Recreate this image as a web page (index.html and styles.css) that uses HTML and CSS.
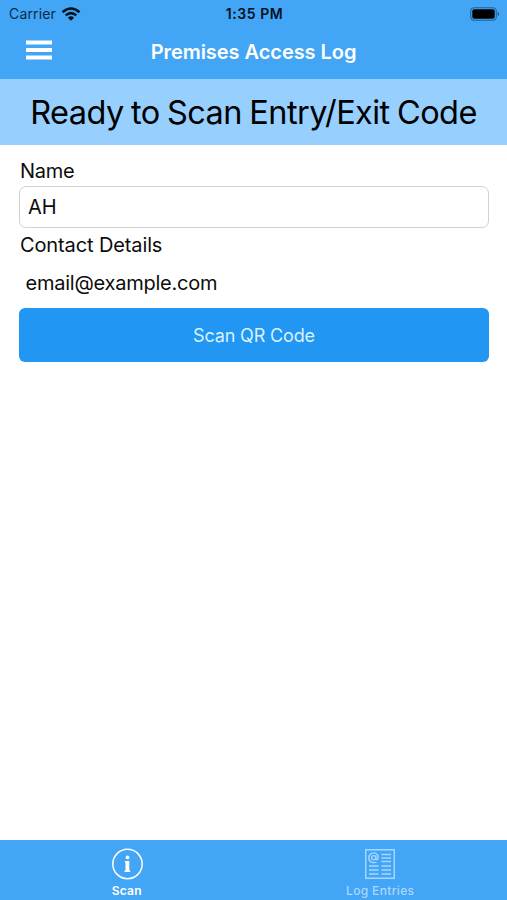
FILE: index.html
```
<!DOCTYPE html>
<html lang="en">
<head>
<meta charset="utf-8">
<title>Premises Access Log</title>
<link rel="stylesheet" href="styles.css">
</head>
<body>
<header class="top">
  <div class="status">
    <div class="carrier"><span>Carrier</span>
      <svg class="wifi" width="20" height="14" viewBox="0 0 20 14"><g fill="none" stroke="#06121d" stroke-width="2.5"><path d="M1.5 5.2Q10-2.2 18.5 5.2"/><path d="M4.7 8.4Q10 3.8 15.3 8.4"/></g><path d="M6.9 10.7Q10 8 13.1 10.7L10 13.8Z" fill="#06121d"/></svg>
    </div>
    <span class="time">1:35 PM</span>
    <svg class="battery" width="30" height="14" viewBox="0 0 30 14"><rect x=".7" y=".7" width="25.6" height="12.6" rx="3.6" fill="none" stroke="#206398" stroke-width="1.1"/><rect x="2.3" y="2.3" width="22.4" height="9.4" rx="2" fill="#000"/><path d="M27.6 4.8Q29.3 5.4 29.3 7T27.6 9.2Z" fill="#206398"/></svg>
  </div>
  <div class="nav">
    <svg class="menu" width="26" height="20" viewBox="0 0 26 20" fill="#fff"><path d="M0 .5h26v4H0zM0 8h26v4H0zM0 15.5h26v4H0z"/></svg>
    <h1>Premises Access Log</h1>
  </div>
</header>
<div class="banner"><span>Ready to Scan Entry/Exit Code</span></div>
<main>
  <div class="label name">Name</div>
  <div class="input"><span>AH</span></div>
  <div class="label contact">Contact Details</div>
  <div class="email"><span>email@example.com</span></div>
  <button><span>Scan QR Code</span></button>
</main>
<footer>
  <div class="tab">
    <svg width="32" height="32" viewBox="0 0 32 32"><circle cx="16.5" cy="16" r="14.7" fill="none" stroke="#fff" stroke-width="1.5"/><circle cx="16.5" cy="9.4" r="1.9" fill="#fff"/><path d="M14 13h4.3v9.6h1V24h-5.8v-1.4h1v-8.2H14z" fill="#fff"/></svg>
    <span>Scan</span>
  </div>
  <div class="tab off">
    <svg width="32" height="32" viewBox="0 0 32 32" fill="none" stroke="#a9d8ff"><path d="M1.7 1.7h28.6v28.6H1.7z" stroke-width="1.4"/><circle cx="9.7" cy="9.8" r="2.1" stroke-width="1.3"/><path d="M11.8 7.6v3q.4 1.5 2 .5Q15 8 12.7 6T7.6 5.3T4.8 10T7.8 14.3T12.5 14" stroke-width="1.3"/><path d="M17.5 6.5H27M17.5 10H27M17.5 13.5H27M5 18h9.5M17.5 18H27M5 22h9.5M17.5 22H27M5 26h9.5M17.5 26H27" stroke-width="1.6"/></svg>
    <span>Log Entries</span>
  </div>
</footer>
</body>
</html>
```
FILE: styles.css
```
* { box-sizing: border-box; }
body {
  margin: 0;
  height: 900px;
  display: flex;
  flex-direction: column;
  background: #fff;
  color: #0c0c0c;
  font-family: Inter, "Liberation Sans", sans-serif;
  white-space: nowrap;
}
.top { height: 79px; background: #42a5f5; }
.status {
  height: 27px;
  display: grid;
  grid-template-columns: 1fr auto 1fr;
  align-items: center;
  padding: 0 7px 0 9px;
}
.carrier { display: flex; align-items: center; gap: 5px; font-size: 14px; color: #0b2c47; letter-spacing: 0.15px; }
.time { font-size: 14px; font-weight: 600; color: #06121d; letter-spacing: 0.55px; }
.battery { justify-self: end; }
.nav {
  height: 50px;
  display: grid;
  grid-template-columns: 1fr auto 1fr;
  align-items: center;
  padding: 0 26px;
}
.menu { margin-top: -4px; }
h1 { margin: 0; font-size: 20px; font-weight: 600; color: #fff; line-height: 50px; letter-spacing: -0.05px; }
.banner {
  height: 66px;
  background: #97d0ff;
  color: #000;
  font-size: 32.5px;
  line-height: 68px;
  text-align: center;
  letter-spacing: -0.57px;
  word-spacing: -1.2px;
}
main { flex: 1; padding: 12px 18px 0 19px; }
.label { font-size: 20px; line-height: 28px; padding-left: 1px; letter-spacing: -0.12px; }
.name { height: 29px; letter-spacing: -0.3px; }
.input {
  height: 42px;
  border: 1px solid #d2d2d2;
  border-radius: 7px;
  padding-left: 8px;
  font-size: 20px;
  line-height: 40px;
}
.contact { height: 32px; line-height: 34px; }
.email { height: 48px; padding-left: 6.5px; font-size: 20px; line-height: 46px; letter-spacing: -0.23px; }
button {
  display: block;
  width: 100%;
  height: 54px;
  border: 0;
  border-radius: 6px;
  background: #2196f3;
  color: #d9f2ff;
  font: 18px Inter, "Liberation Sans", sans-serif;
  letter-spacing: -0.15px;
}
footer { height: 60px; display: flex; background: #42a5f5; }
.tab {
  flex: 1;
  display: flex;
  flex-direction: column;
  align-items: center;
  padding-top: 8px;
  gap: 3px;
  color: #fff;
  font-size: 12px;
  font-weight: 600;
  line-height: 16px;
  letter-spacing: 0.25px;
}
.off { color: #a9d8ff; font-weight: 500; letter-spacing: 0.35px; }
```
